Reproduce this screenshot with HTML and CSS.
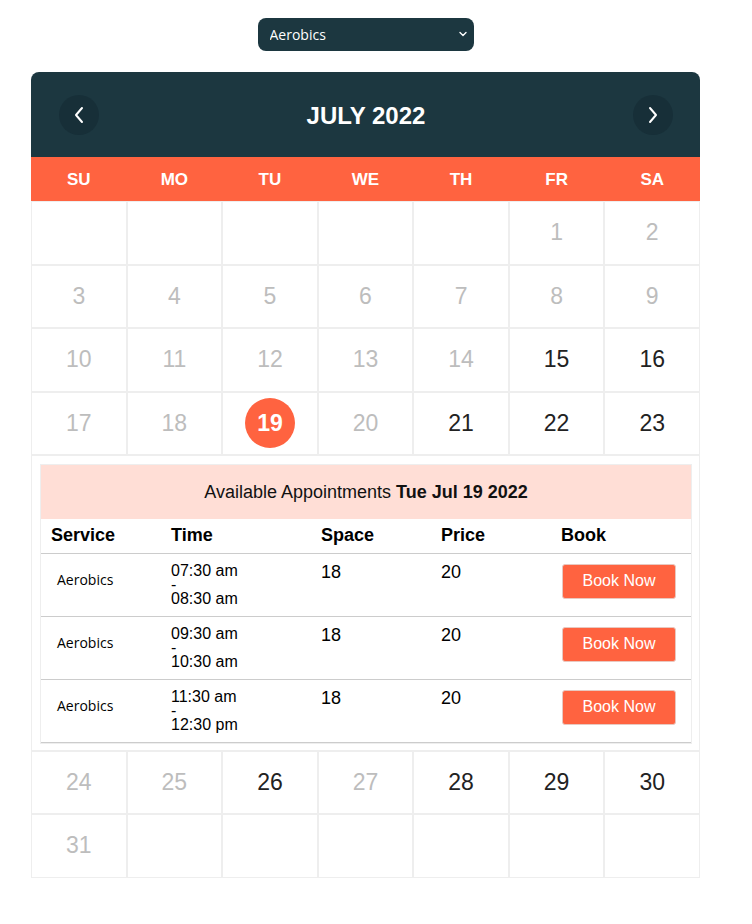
FILE: index.html
```html
<!DOCTYPE html>
<html>
<head>
<meta charset="utf-8">
<link rel="stylesheet" href="styles.css">
</head>
<body>
<div class="page">
  <div class="select-row">
    <div class="select-wrap">
      <select class="service-select">
        <option>Aerobics</option>
      </select>
      <svg class="chev" width="10" height="10" viewBox="0 0 10 10"><path d="M2 3.5 L5 6.5 L8 3.5" fill="none" stroke="#fff" stroke-width="1.4" stroke-linecap="round" stroke-linejoin="round"/></svg>
    </div>
  </div>

  <div class="calendar">
    <div class="cal-header">
      <button class="nav-btn"><svg width="14" height="20" viewBox="0 0 14 20"><path d="M10 3 L4 10 L10 17" fill="none" stroke="#fff" stroke-width="2" stroke-linecap="round" stroke-linejoin="round"/></svg></button>
      <div class="month">JULY 2022</div>
      <button class="nav-btn"><svg width="14" height="20" viewBox="0 0 14 20"><path d="M4 3 L10 10 L4 17" fill="none" stroke="#fff" stroke-width="2" stroke-linecap="round" stroke-linejoin="round"/></svg></button>
    </div>
    <div class="weekdays">
      <div>SU</div><div>MO</div><div>TU</div><div>WE</div><div>TH</div><div>FR</div><div>SA</div>
    </div>
    <div class="days">
      <div class="day"></div><div class="day"></div><div class="day"></div><div class="day"></div><div class="day"></div><div class="day past">1</div><div class="day past">2</div>
      <div class="day past">3</div><div class="day past">4</div><div class="day past">5</div><div class="day past">6</div><div class="day past">7</div><div class="day past">8</div><div class="day past">9</div>
      <div class="day past">10</div><div class="day past">11</div><div class="day past">12</div><div class="day past">13</div><div class="day past">14</div><div class="day">15</div><div class="day">16</div>
      <div class="day past">17</div><div class="day past">18</div><div class="day"><span class="selected">19</span></div><div class="day past">20</div><div class="day">21</div><div class="day">22</div><div class="day">23</div>
      <div class="appt-cell">
        <div class="appt-box">
          <div class="appt-title">Available Appointments <b>Tue Jul 19 2022</b></div>
          <table class="appt-table">
            <thead>
              <tr><th class="c-service">Service</th><th class="c-time">Time</th><th class="c-space">Space</th><th class="c-price">Price</th><th class="c-book">Book</th></tr>
            </thead>
            <tbody>
              <tr><td class="svc">Aerobics</td><td class="time">07:30 am<br>-<br>08:30 am</td><td class="num">18</td><td class="num">20</td><td><button class="book">Book Now</button></td></tr>
              <tr><td class="svc">Aerobics</td><td class="time">09:30 am<br>-<br>10:30 am</td><td class="num">18</td><td class="num">20</td><td><button class="book">Book Now</button></td></tr>
              <tr><td class="svc">Aerobics</td><td class="time">11:30 am<br>-<br>12:30 pm</td><td class="num">18</td><td class="num">20</td><td><button class="book">Book Now</button></td></tr>
            </tbody>
          </table>
        </div>
      </div>
      <div class="day past">24</div><div class="day past">25</div><div class="day">26</div><div class="day past">27</div><div class="day">28</div><div class="day">29</div><div class="day">30</div>
      <div class="day past">31</div><div class="day"></div><div class="day"></div><div class="day"></div><div class="day"></div><div class="day"></div><div class="day"></div>
    </div>
  </div>
</div>
</body>
</html>
```

FILE: styles.css
```css
* { box-sizing: border-box; }
body {
  margin: 0;
  background: #fff;
  font-family: "Liberation Sans", Arial, sans-serif;
  color: #111;
}
.page {
  width: 669px;
  margin-left: 31px;
  padding-top: 18px;
}
.select-row {
  display: flex;
  justify-content: center;
}
.select-wrap {
  position: relative;
  width: 216px;
  height: 33px;
}
.service-select {
  appearance: none;
  -webkit-appearance: none;
  width: 216px;
  height: 33px;
  border: none;
  border-radius: 8px;
  background: #1c3740;
  color: #fff;
  font-family: "Open Sans", "Noto Sans", sans-serif;
  font-size: 14px;
  padding: 0 12px;
  outline: none;
}
.chev {
  position: absolute;
  right: 6px;
  top: 11px;
  pointer-events: none;
}
.calendar {
  margin-top: 21px;
}
.cal-header {
  height: 85px;
  background: #1c3740;
  border-radius: 8px 8px 0 0;
  display: flex;
  align-items: center;
  justify-content: space-between;
  padding: 0 27px 0 28px;
}
.nav-btn {
  width: 40px;
  height: 40px;
  border-radius: 50%;
  border: none;
  background: #172f38;
  display: flex;
  align-items: center;
  justify-content: center;
  padding: 0;
}
.month {
  color: #fff;
  font-weight: bold;
  font-size: 24px;
  padding-top: 2px;
}
.weekdays {
  height: 44px;
  background: #ff6340;
  display: grid;
  grid-template-columns: repeat(7, 1fr);
  align-items: center;
  text-align: center;
  color: #fff;
  font-weight: bold;
  font-size: 17px;
  padding-top: 2px;
}
.days {
  display: grid;
  grid-template-columns: repeat(7, 1fr);
}
.day {
  height: 63.5px;
  border: 1px solid #eeeeee;
  display: flex;
  align-items: center;
  justify-content: center;
  font-size: 23px;
  color: #222;
}
.day.past { color: #bdbdbd; }
.selected {
  width: 50px;
  height: 50px;
  border-radius: 50%;
  background: #ff6340;
  color: #fff;
  font-weight: bold;
  display: flex;
  align-items: center;
  justify-content: center;
}
.appt-cell {
  grid-column: 1 / -1;
  border: 1px solid #eeeeee;
  padding: 8px 7px 6px 8px;
}
.appt-box {
  border: 1px solid #eeeeee;
  background: #fff;
}
.appt-title {
  height: 54px;
  background: #ffded6;
  display: flex;
  align-items: center;
  justify-content: center;
  font-size: 18px;
  color: #111;
}
.appt-title b { margin-left: 5px; }
.appt-table {
  width: 100%;
  border-collapse: collapse;
  table-layout: fixed;
}
.appt-table th {
  text-align: left;
  font-size: 18px;
  font-weight: bold;
  height: 34px;
  padding: 0 10px;
  border-bottom: 1px solid #cccccc;
  color: #000;
}
.c-service { width: 120px; }
.c-time { width: 150px; }
.c-space { width: 120px; }
.c-price { width: 120px; }
.appt-table tbody tr { height: 63px; }
.appt-table thead tr { height: 34px; }
.appt-table td {
  vertical-align: top;
  padding: 10px 10px 0;
  border-bottom: 1px solid #cccccc;
  font-size: 16px;
  line-height: 14px;
  color: #000;
}
.appt-table td.svc {
  font-family: "Open Sans", "Noto Sans", sans-serif;
  font-size: 14px;
  line-height: 16px;
  padding-top: 18px;
  padding-left: 16px;
}
.appt-table td.num {
  font-size: 18px;
  line-height: 16px;
  padding-top: 10px;
}
.book {
  margin-top: 0;
  margin-left: 1px;
  width: 114px;
  height: 35px;
  background: #ff6340;
  color: #fff;
  border: 1px solid #e8c8c0;
  border-radius: 3px;
  font-family: "Liberation Sans", Arial, sans-serif;
  font-size: 16px;
  padding: 0;
}
```
